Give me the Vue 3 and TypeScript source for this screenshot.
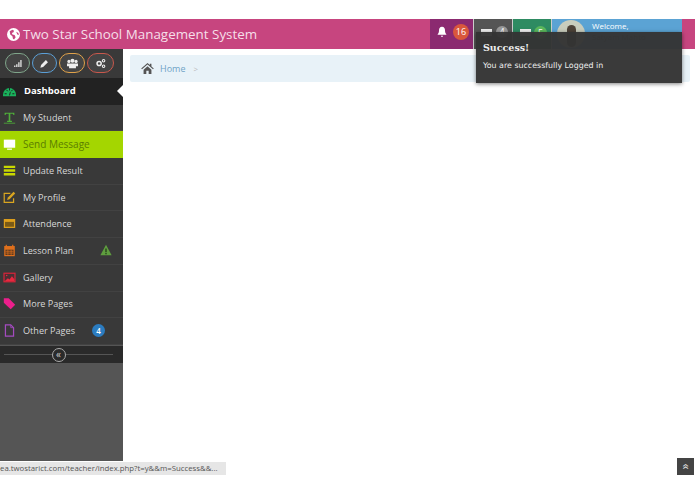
<template>
  <div class="page">
    <header class="navbar">
      <div class="brand">
        <svg class="globe" viewBox="0 0 24 24"><circle cx="12" cy="12" r="12" fill="#fff" /><path d="M5 6l5-3 3 2-1 3-3 1 1 3 4 1 2 4-3 4-2-1-1-5-4-3zM17 7l4 2 1 4-3-1z" fill="#c7457f" /></svg>
        <span>Two Star School Management System</span>
      </div>
      <nav class="top-menu">
        <div class="top-item bell">
          <svg viewBox="0 0 16 16" class="top-icon"><path d="M8 1c-3 0-4 2.500-4 5 0 3-1 4-2 5.500h12C13 10 12 9 12 6c0-2.500-1-5-4-5zM6.500 13a1.500 1.500 0 0 0 3 0z" fill="#fff" /></svg>
          <span class="count red">16</span>
        </div>
        <div class="top-item mail">
          <span class="bar-icon"></span>
          <span class="count grey">4</span>
        </div>
        <div class="top-item tasks">
          <span class="bar-icon"></span>
          <span class="count green">5</span>
        </div>
        <div class="top-item user">
          <div class="avatar"><span class="head"></span></div>
          <div class="welcome">
            <span>Welcome,</span>
            <span class="name">Satyam Mahto</span>
          </div>
        </div>
      </nav>
    </header>

    <div class="body-row">
      <aside class="sidebar">
        <div class="shortcuts">
          <button class="short s-green">
            <svg viewBox="0 0 16 16"><path d="M3 11h2v2H3zM6 9h2v4H6zM9 6h2v7H9zM12 3h2v10h-2z" fill="#ddd" /></svg>
          </button>
          <button class="short s-blue">
            <svg viewBox="0 0 16 16"><path d="M2 14l1-4 7-7 3 3-7 7z" fill="#eee" /></svg>
          </button>
          <button class="short s-orange">
            <svg viewBox="0 0 16 16"><circle cx="8" cy="4" r="3" fill="#eee" /><circle cx="2.800" cy="5" r="2.300" fill="#eee" /><circle cx="13.200" cy="5" r="2.300" fill="#eee" /><path d="M0 8h16v4h-3v3H3v-3H0z" fill="#eee" /></svg>
          </button>
          <button class="short s-red">
            <svg viewBox="0 0 16 16"><circle cx="6" cy="8" r="3" fill="none" stroke="#eee" stroke-width="2.200" /><circle cx="12.500" cy="4" r="1.800" fill="none" stroke="#eee" stroke-width="1.600" /><circle cx="12.500" cy="12" r="1.800" fill="none" stroke="#eee" stroke-width="1.600" /></svg>
          </button>
        </div>

        <ul class="menu">
          <li
            v-for="item in menu"
            :key="item.label"
            class="menu-item"
            :class="{ active: item.active, lime: item.lime }"
          >
            <span class="icon" v-html="item.icon"></span>
            <span class="label">{{ item.label }}</span>
            <svg v-if="item.warn" class="warn" viewBox="0 0 16 16"><path d="M8 1l7.500 14H.5z" fill="#5f9e3f" /><path d="M7.200 6h1.600v5H7.200zM7.200 12h1.600v1.500H7.200z" fill="#1f3316" /></svg>
            <span v-if="item.badge" class="badge">{{ item.badge }}</span>
          </li>
        </ul>

        <div class="collapse">
          <span class="collapse-btn">«</span>
        </div>
        <div class="sidebar-fill"></div>
      </aside>

      <main class="content">
        <div class="breadcrumb">
          <svg class="home" viewBox="0 0 16 14"><path d="M8 0l3 2.600V1h2v3.300L16 7l-1 1-7-6-7 6-1-1zM3 8.500L8 4l5 4.500V14H9.500v-4h-3v4H3z" fill="#555" /></svg>
          <span class="crumb">Home</span>
          <span class="sep">&gt;</span>
        </div>
      </main>
    </div>

    <div class="notice">
      <div class="notice-title">Success!</div>
      <div class="notice-text">You are successfully Logged in</div>
    </div>
    <div class="status-url">ea.twostarict.com/teacher/index.php?t=y&amp;&amp;m=Success&amp;&amp;...</div>
    <div class="to-top">»</div>
  </div>
</template>

<script setup lang="ts">
interface MenuItem {
  label: string
  icon: string
  active?: boolean
  lime?: boolean
  warn?: boolean
  badge?: number
}

const svg = (body: string) => `<svg viewBox="0 0 16 16" width="13" height="13">${body}</svg>`

const menu: MenuItem[] = [
  {
    label: 'Dashboard',
    active: true,
    icon: svg('<path d="M0 15a8 8 0 0 1 0-2 8 8 0 0 1 16 0 8 8 0 0 1 0 2z" fill="#19b35c"/><path d="M8 5v3M4 7l2 2M12 7l-2 2M2 12h2.500M11.500 12H14M8 14l1-4" stroke="#222" stroke-width="1.200"/>'),
  },
  {
    label: 'My Student',
    icon: svg('<path d="M2 2h12v3h-1l-1-1.500H9V12h2v1.500H5V12h2V3.500H4L3 5H2z" fill="#4fae3a"/><path d="M1 15h14" stroke="#4fae3a"/>'),
  },
  {
    label: 'Send Message',
    lime: true,
    icon: svg('<path d="M1 2h14v10H1z" fill="#fff"/><path d="M5 13h6v1.500H5z" fill="#fff"/>'),
  },
  {
    label: 'Update Result',
    icon: svg('<path d="M1 2h14v3H1zM1 6.500h14v3H1zM1 11h14v3H1z" fill="#c9d800"/>'),
  },
  {
    label: 'My Profile',
    icon: svg('<path d="M13 9v5H1.500V3H9" fill="none" stroke="#d9a520" stroke-width="1.500"/><path d="M5 11l1-3 7-7 2 2-7 7z" fill="#d9a520"/>'),
  },
  {
    label: 'Attendence',
    icon: svg('<path d="M1 2.500h14v11H1z" fill="#e0a01c"/><path d="M2.500 6h11v6h-11z" fill="#7a5a16"/>'),
  },
  {
    label: 'Lesson Plan',
    warn: true,
    icon: svg('<path d="M1.500 2.500h13V15h-13z" fill="#e0701c"/><path d="M4 1v3M12 1v3" stroke="#e0701c" stroke-width="1.500"/><path d="M3 7h10v6.500H3z" fill="#5c3a20"/><path d="M3 9h10M3 11.200h10M6 7v6.500M10 7v6.500" stroke="#e0701c" stroke-width=".8"/>'),
  },
  {
    label: 'Gallery',
    icon: svg('<path d="M.5 2h15v12H.5z" fill="#d8243a"/><path d="M2 3.500h12v9H2z" fill="#4a3034"/><path d="M2 12.500L6 9l2 1.500 3-4 3 3.500v2.500z" fill="#e8283f"/><circle cx="4.500" cy="5.500" r="1" fill="#e8283f"/>'),
  },
  {
    label: 'More Pages',
    icon: svg('<path d="M1 1.500h6l8 8-5.500 5.500-8.500-8z" fill="#ec1f8c"/>'),
  },
  {
    label: 'Other Pages',
    icon: svg('<path d="M3 1h6.500L13 4.500V15H3z" fill="none" stroke="#a44bc0" stroke-width="1.500"/><path d="M9.500 1v3.500H13" fill="none" stroke="#a44bc0"/>'),
    badge: 4,
  },
]
</script>

<style>
html,
body {
  margin: 0;
  background: #fff;
}
</style>

<style scoped>
.page {
  position: relative;
  width: 695px;
  height: 494px;
  overflow: hidden;
  padding-top: 19px;
  box-sizing: border-box;
  font-family: "Open Sans", "Liberation Sans", sans-serif;
}

.navbar {
  display: flex;
  justify-content: space-between;
  height: 30px;
  padding-right: 13px;
  background: #c7457f;
}

.brand {
  display: flex;
  align-items: center;
  gap: 3px;
  padding-left: 7px;
  color: #f6dfe9;
  font-size: 13.400px;
}

.globe {
  width: 13px;
  height: 13px;
}

.top-menu {
  display: flex;
}

.top-item {
  display: flex;
  align-items: center;
  box-sizing: border-box;
  padding-bottom: 4px;
}

.bell {
  width: 43px;
  gap: 5px;
  padding-left: 6px;
  background: #8b2a70;
}

.mail {
  width: 39px;
  gap: 4px;
  padding-left: 7px;
  background: #555;
  border-left: 1px solid #ccc;
}

.tasks {
  width: 39px;
  gap: 3px;
  padding-left: 7px;
  background: #2e8b62;
  border-left: 1px solid #ccc;
}

.user {
  width: 131px;
  gap: 7px;
  padding-left: 5px;
  padding-bottom: 0;
  background: #5ba3d4;
  border-left: 1px solid #ccc;
}

.top-icon {
  width: 12px;
  height: 12px;
}

.bar-icon {
  width: 11px;
  height: 7px;
  background: #eee;
}

.count {
  min-width: 16px;
  height: 16px;
  border-radius: 8px;
  color: #fff;
  font-size: 9px;
  line-height: 16px;
  text-align: center;
}

.count.red {
  background: #d9573c;
}

.count.grey {
  min-width: 12px;
  height: 12px;
  line-height: 12px;
  background: #999;
}

.count.green {
  min-width: 13px;
  height: 13px;
  line-height: 13px;
  background: #5cb85c;
}

.avatar {
  position: relative;
  width: 28px;
  height: 28px;
  border-radius: 50%;
  background: #c9cdbd;
  overflow: hidden;
  flex: none;
}

.head {
  position: absolute;
  left: 10px;
  top: 5px;
  width: 9px;
  height: 22px;
  border-radius: 5px;
  background: #4d4238;
}

.welcome {
  display: flex;
  flex-direction: column;
  color: #fff;
  font-size: 8px;
  line-height: 11px;
  padding-bottom: 6px;
}

.name {
  color: #333;
}

.body-row {
  display: flex;
}

.sidebar {
  display: flex;
  flex-direction: column;
  width: 123px;
  height: 412px;
  background: #555;
  flex: none;
}

.shortcuts {
  display: flex;
  gap: 2px;
  height: 29px;
  padding: 4px 0 0 5px;
  box-sizing: border-box;
  background: #393939;
}

.short {
  display: flex;
  align-items: center;
  justify-content: center;
  width: 25px;
  height: 20px;
  padding: 0;
  border: 1.500px solid;
  border-radius: 10px;
  background: #444;
}

.short svg {
  width: 11px;
  height: 11px;
}

.s-green {
  border-color: #7fa58a;
}

.s-blue {
  border-color: #5b9fd6;
}

.s-orange {
  width: 26px;
  border-color: #e0a24a;
}

.s-red {
  width: 27px;
  border-color: #c9584c;
}

.menu {
  margin: 0;
  padding: 0;
  list-style: none;
}

.menu-item {
  position: relative;
  display: flex;
  align-items: center;
  height: 26.700px;
  box-sizing: border-box;
  padding: 0 0 1px 3px;
  background: #393939;
  border-bottom: 1px solid #424242;
  color: #d8d8d8;
  font-size: 9.100px;
}

.icon {
  display: flex;
  width: 20px;
}

.active {
  background: #222;
  color: #fff;
  font-size: 9.500px;
  font-weight: 700;
  border-bottom: 0;
}

.active .icon {
  width: 21px;
}

.active::after {
  content: "";
  position: absolute;
  right: 0;
  top: 7px;
  border: 6px solid transparent;
  border-right-color: #fff;
  border-left-width: 0;
}

.lime {
  background: #a4d600;
  color: #5b7d00;
  font-size: 10px;
  border-bottom: 0;
}

.warn {
  position: absolute;
  right: 11px;
  width: 12px;
  height: 12px;
}

.badge {
  position: absolute;
  right: 18px;
  width: 13px;
  height: 13px;
  border-radius: 50%;
  background: #2b7cc0;
  color: #fff;
  font-size: 8px;
  font-weight: 600;
  line-height: 13px;
  text-align: center;
}

.collapse {
  position: relative;
  display: flex;
  align-items: center;
  justify-content: center;
  height: 18px;
  margin-top: 0.500px;
  background: #2a2a2a;
  border-top: 1px solid #555;
  box-sizing: border-box;
}

.collapse::before {
  content: "";
  position: absolute;
  left: 4px;
  right: 10px;
  top: 8px;
  height: 1px;
  background: #555;
}

.collapse-btn {
  position: relative;
  width: 12px;
  height: 12px;
  margin-right: 6px;
  border: 1px solid #aaa;
  border-radius: 50%;
  background: #2a2a2a;
  color: #ccc;
  font-size: 10px;
  line-height: 10px;
  text-align: center;
}

.sidebar-fill {
  flex: 1;
}

.content {
  flex: 1;
  padding: 6px 5px 0 7px;
}

.breadcrumb {
  display: flex;
  align-items: center;
  height: 27px;
  padding-left: 11px;
  border-radius: 2px;
  background: #e8f2f8;
  font-size: 9px;
}

.home {
  width: 13px;
  height: 11px;
  margin-right: 6px;
}

.crumb {
  color: #6fa3c7;
}

.sep {
  margin-left: 8px;
  color: #bbb;
  font-size: 8px;
}

.notice {
  position: absolute;
  left: 476px;
  top: 32px;
  width: 206px;
  height: 51px;
  box-sizing: border-box;
  padding: 9px 7px 0;
  background: rgba(52, 52, 52, 0.97);
  box-shadow: 0 1px 4px rgba(0, 0, 0, 0.5);
  color: #eee;
}

.notice-title {
  font-family: "DejaVu Serif", "Liberation Serif", serif;
  font-size: 9.500px;
  font-weight: 700;
  line-height: 14px;
}

.notice-text {
  margin-top: 5px;
  font-family: "DejaVu Sans", "Liberation Sans", sans-serif;
  font-size: 7.900px;
  line-height: 12px;
}

.status-url {
  position: absolute;
  left: 0;
  top: 462px;
  width: 226px;
  height: 13px;
  background: #e6e6e6;
  color: #555;
  font-size: 7.800px;
  line-height: 13px;
  white-space: nowrap;
  overflow: hidden;
}

.to-top {
  position: absolute;
  left: 677px;
  top: 458px;
  width: 17px;
  height: 17px;
  background: #444;
  color: #ddd;
  font-size: 12px;
  line-height: 15px;
  text-align: center;
  transform: rotate(-90deg);
}
</style>
